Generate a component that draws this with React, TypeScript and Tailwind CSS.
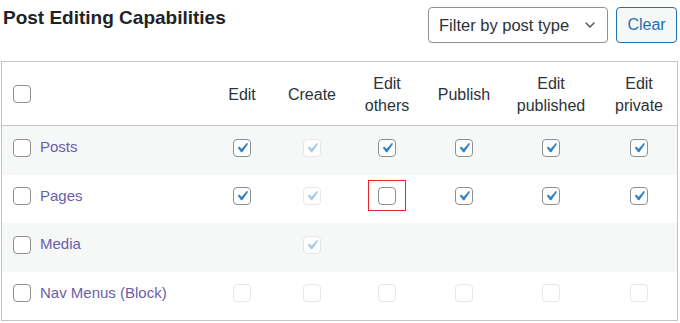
import { ChevronDown } from "lucide-react"

type Cell = "on" | "off" | "dis-on" | "dis-off" | "none"

type Row = { label: string; cells: Cell[] }

const columns = [["Edit"], ["Create"], ["Edit", "others"], ["Publish"], ["Edit", "published"], ["Edit", "private"]]

const rows: Row[] = [
  { label: "Posts", cells: ["on", "dis-on", "on", "on", "on", "on"] },
  { label: "Pages", cells: ["on", "dis-on", "off", "on", "on", "on"] },
  { label: "Media", cells: ["none", "dis-on", "none", "none", "none", "none"] },
  { label: "Nav Menus (Block)", cells: ["dis-off", "dis-off", "dis-off", "dis-off", "dis-off", "dis-off"] },
]

const Check = ({ color }: { color: string }) => (
  <svg viewBox="0 0 20 20" className="w-[20px] h-[20px] -m-[2px]">
    <path d="M14.83 4.89l1.34.94-5.81 8.38H9.02L5.78 9.67l1.34-1.25 2.57 2.4z" fill={color} />
  </svg>
)

const Box = ({ state }: { state: Cell }) => {
  if (state === "none") return null
  const disabled = state.startsWith("dis")
  const checked = state === "on" || state === "dis-on"
  return (
    <span
      className={
        "flex items-center justify-center w-[18px] h-[18px] rounded-[4px] border bg-white " +
        (disabled ? "border-[#e6e7e8]" : "border-[#8c8f94]")
      }
    >
      {checked && <Check color={disabled ? "#a9c9e8" : "#3582c4"} />}
    </span>
  )
}

const App = () => {
  return (
    <div className="w-[680px] h-[323px] bg-white overflow-hidden font-['Liberation_Sans',Arial,sans-serif] text-[#2c3338]">
      <div className="flex items-start justify-between h-[61px]">
        <h2 className="ml-[3px] mt-[4px] text-[19px] font-bold text-[#1d2327]">Post Editing Capabilities</h2>
        <div className="flex gap-[8px] mt-[7px] mr-[3px]">
          <div className="flex items-center justify-between w-[180px] h-[36px] rounded-[4px] border border-[#8c8f94] pl-[10px] pr-[9px] text-[16.5px] text-[#2c3338]">
            <span>Filter by post type</span>
            <ChevronDown size={16} strokeWidth={2.2} className="text-[#50575e]" />
          </div>
          <button className="w-[61px] h-[36px] rounded-[4px] border border-[#2271b1] bg-[#f6f7f7] text-[16px] text-[#2271b1]">
            Clear
          </button>
        </div>
      </div>
      <div className="ml-[1px] w-[677px] border border-[#c3c4c7]">
        <div className="grid grid-cols-[205px_70px_70px_80px_74px_100px_76px] h-[64px] border-b border-[#c3c4c7] text-[16px] leading-[22px]">
          <div className="flex items-center pl-[11px]">
            <Box state="off" />
          </div>
          {columns.map((c, i) => (
            <div key={i} className="flex flex-col items-center justify-center text-center pt-[3px]">
              {c.map(t => (
                <span key={t}>{t}</span>
              ))}
            </div>
          ))}
        </div>
        {rows.map((r, ri) => (
          <div
            key={r.label}
            className={
              "grid grid-cols-[205px_70px_70px_80px_74px_100px_76px] pb-[6px] " +
              (ri % 2 === 0 ? "bg-[#f6f7f7] h-[49px]" : "bg-white h-[48px]")
            }
          >
            <div className="flex items-center gap-[9px] pl-[11px] text-[15px] text-[#6b5ea8]">
              <Box state="off" />
              <span>{r.label}</span>
            </div>
            {r.cells.map((c, ci) => (
              <div key={ci} className="flex items-center justify-center">
                {r.label === "Pages" && ci === 2 ? (
                  <span className="relative">
                    <Box state={c} />
                    <span className="absolute -left-[10px] -top-[7px] w-[38px] h-[31px] border border-[#e3262c]" />
                  </span>
                ) : (
                  <Box state={c} />
                )}
              </div>
            ))}
          </div>
        ))}
      </div>
    </div>
  )
}

export default App
